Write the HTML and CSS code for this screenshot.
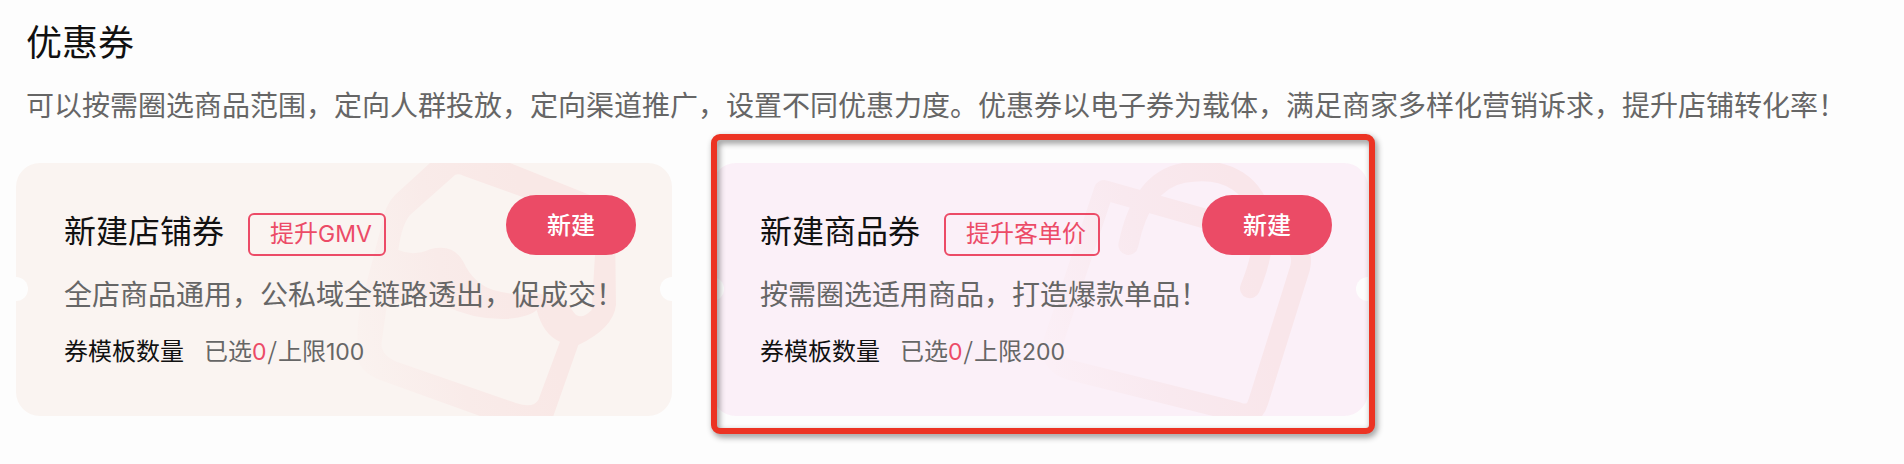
FILE: index.html
```html
<!DOCTYPE html>
<html lang="zh-CN">
<head>
  <meta charset="UTF-8">
  <meta name="viewport" content="width=device-width, initial-scale=1.0">
  <title>优惠券</title>
  <link rel="stylesheet" href="styles.css">
</head>
<body>
  <header class="page-header">
    <h1>优惠券</h1>
    <p>可以按需圈选商品范围，定向人群投放，定向渠道推广，设置不同优惠力度。优惠券以电子券为载体，满足商家多样化营销诉求，提升店铺转化率！</p>
  </header>

  <main class="coupon-list">
    <section class="coupon coupon-shop">
      <!-- Price tag watermark -->
      <svg class="coupon-bg" viewBox="-942 24 1968 759" aria-hidden="true">
        <defs>
          <linearGradient id="shop-fade" gradientUnits="userSpaceOnUse" x1="60" y1="450" x2="620" y2="330">
            <stop offset="0" stop-color="#faf2ef"/>
            <stop offset="0.5" stop-color="#f9ebe9"/>
            <stop offset="1" stop-color="#f9e8e6"/>
          </linearGradient>
        </defs>
        <path fill="url(#shop-fade)" fill-rule="evenodd" d="M300 24 L195 120 Q165 150 155 210 L90 460 Q80 510 82 600 Q85 650 150 675 L450 783 L670 783 L745 570 Q850 520 858 450 L855 210 Q850 150 780 120 L540 24 Z
          M375 60 L240 180 Q215 210 205 285 Q250 305 300 283 Q370 265 400 320 Q430 385 490 405 Q560 425 620 415 Q700 425 730 470 Q750 500 785 465 L795 300 L790 220 Q780 190 740 185 L400 62 Q385 55 375 60 Z
          M170 455 Q270 410 340 450 Q430 495 530 492 Q600 485 620 465 Q640 540 690 560 L625 735 Q610 760 560 745 L200 620 Q150 600 155 560 Z"/>
      </svg>
      <div class="coupon-body">
        <div class="coupon-head">
          <h2>新建店铺券</h2>
          <span class="tag">提升<span class="latin">GMV</span></span>
        </div>
        <p class="coupon-desc">全店商品通用，公私域全链路透出，促成交！</p>
        <p class="coupon-count"><span class="label">券模板数量</span>已选<em class="latin">0</em><span class="slash">/</span>上限<span class="latin">100</span></p>
      </div>
      <button class="btn" type="button">新建</button>
    </section>

    <section class="coupon coupon-goods">
      <!-- Shopping bag watermark -->
      <svg class="coupon-bg" viewBox="-924 24 1968 759" aria-hidden="true">
        <defs>
          <linearGradient id="goods-fade" gradientUnits="userSpaceOnUse" x1="60" y1="480" x2="700" y2="330">
            <stop offset="0" stop-color="#fbeff6"/>
            <stop offset="0.5" stop-color="#f9e9ef"/>
            <stop offset="1" stop-color="#f9e6ea"/>
          </linearGradient>
        </defs>
        <g fill="none" stroke="url(#goods-fade)" stroke-width="60" stroke-linejoin="round" stroke-linecap="round">
          <path d="M252 105 L100 560 Q85 625 150 645 L650 770 Q700 790 715 740 L840 340 Q855 280 800 260 Z"/>
          <path d="M325 270 C350 150 400 70 490 54 C620 30 715 90 728 210 Q735 290 690 400"/>
        </g>
      </svg>
      <div class="coupon-body">
        <div class="coupon-head">
          <h2>新建商品券</h2>
          <span class="tag">提升客单价</span>
        </div>
        <p class="coupon-desc">按需圈选适用商品，打造爆款单品！</p>
        <p class="coupon-count"><span class="label">券模板数量</span>已选<em class="latin">0</em><span class="slash">/</span>上限<span class="latin">200</span></p>
      </div>
      <button class="btn" type="button">新建</button>
      <div class="highlight"></div>
    </section>
  </main>
</body>
</html>
```
FILE: styles.css
```css
* {
  box-sizing: border-box;
}
body {
  margin: 0;
  min-height: 464px;
  padding: 16px 16px 0;
  font-family: 'Noto Sans CJK SC', sans-serif;
  background-color: #fdfdfd;
  color: #111;
}
h1, h2, p {
  margin: 0;
  font-weight: 400;
}
.page-header {
  padding-left: 10px;
  white-space: nowrap;
}
.page-header h1 {
  font-size: 36px;
  line-height: 48px;
}
.page-header p {
  margin-top: 19px;
  font-size: 28px;
  line-height: 42px;
  color: #666;
}
.coupon-list {
  display: flex;
  gap: 40px;
  margin-top: 38px;
}
.coupon {
  position: relative;
  display: flex;
  justify-content: space-between;
  align-items: flex-start;
  width: 656px;
  height: 253px;
  padding: 32px 36px 0 48px;
  border-radius: 24px;
}
.coupon-shop {
  background-color: #faf4f1;
}
.coupon-goods {
  background-color: #fbf0f8;
}
/* Ticket notches */
.coupon::before,
.coupon::after {
  content: '';
  position: absolute;
  top: 114px;
  width: 24px;
  height: 24px;
  border-radius: 50%;
  background-color: #fdfdfd;
}
.coupon::before {
  left: -12px;
}
.coupon::after {
  right: -12px;
}
.coupon-bg {
  position: absolute;
  top: 0;
  left: 0;
  width: 656px;
  height: 253px;
  border-radius: 24px;
}
.coupon-body {
  position: relative;
  white-space: nowrap;
}
.coupon-head {
  display: flex;
  align-items: flex-start;
  gap: 24px;
}
.coupon-head h2 {
  padding-top: 10px;
  font-size: 32px;
  line-height: 48px;
}
.tag {
  height: 43px;
  margin-top: 18px;
  padding: 0 12px 0 20px;
  border: 2px solid #ec4b67;
  border-radius: 6px;
  font-size: 24px;
  line-height: 34px;
  color: #ec4b67;
}
.latin {
  font-family: Inter, sans-serif;
  font-size: 23px;
  line-height: 1;
}
.coupon-desc {
  margin-top: 17px;
  font-size: 28px;
  line-height: 40px;
  color: #666;
}
.coupon-count {
  margin-top: 19px;
  font-size: 24px;
  line-height: 36px;
  color: #666;
}
.coupon-count .label {
  margin-right: 20px;
  color: #111;
}
.coupon-count em {
  font-style: normal;
  color: #ec4b67;
}
.slash {
  padding: 0 1px;
}
.btn {
  position: relative;
  flex: none;
  width: 130px;
  height: 60px;
  margin-left: -130px;
  padding: 0 0 4px;
  border: none;
  border-radius: 30px;
  background-color: #eb4b66;
  color: #fff;
  font-family: inherit;
  font-size: 24px;
  font-weight: 500;
  cursor: pointer;
}
/* Red frame around the selected coupon */
.highlight {
  position: absolute;
  z-index: 1;
  top: -29px;
  left: -1px;
  width: 664px;
  height: 300px;
  border: 6px solid #ec3323;
  border-radius: 9px;
  filter: drop-shadow(2px 3px 3px rgba(0, 0, 0, 0.45));
  pointer-events: none;
}
```
